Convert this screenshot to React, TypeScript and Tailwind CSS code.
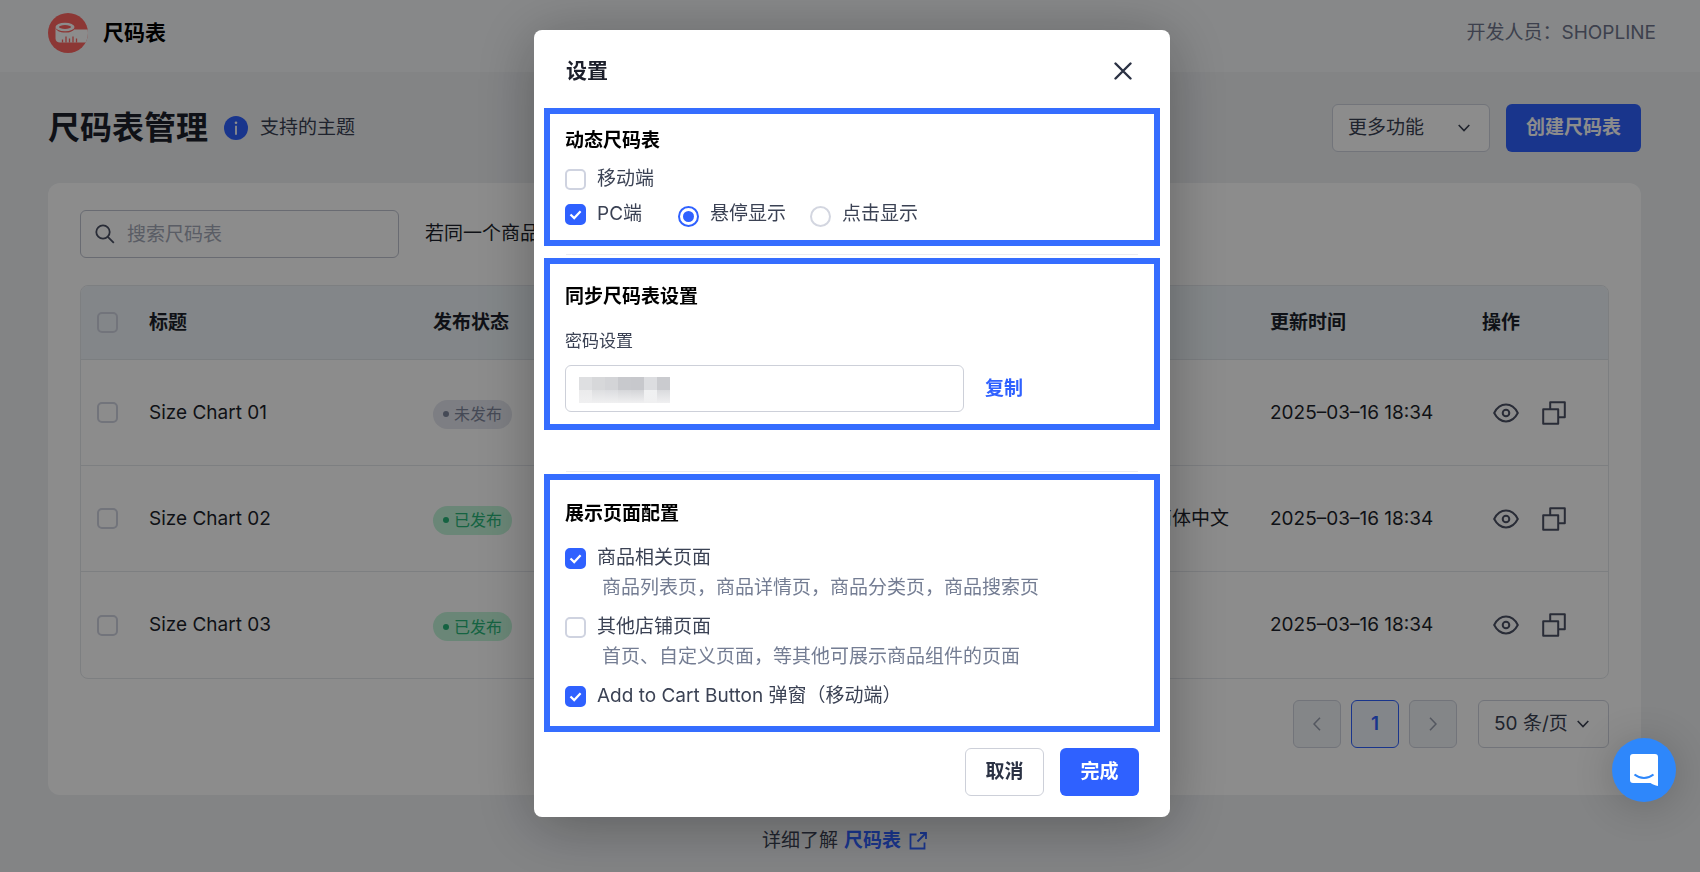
import React from 'react';

type CheckProps = { label: string; checked?: boolean; hideLabel?: boolean };

function Check({ label, checked = false, hideLabel = false }: CheckProps) {
  return (
    <label className="flex items-center gap-[11px]">
      <span className="relative block size-[21px] shrink-0">
        <input
          type="checkbox"
          defaultChecked={checked}
          aria-label={hideLabel ? label : undefined}
          className="peer block size-[21px] appearance-none rounded-[5px] border-2 border-[#cfd3e0] checked:border-[#2f61ff] checked:bg-[#2f61ff]"
        />
        <svg
          viewBox="0 0 21 21"
          fill="none"
          stroke="white"
          strokeWidth="2.2"
          className="pointer-events-none absolute inset-0 hidden peer-checked:block"
        >
          <path d="M5.500 10.500l3.700 3.600 6.400-6.800" />
        </svg>
      </span>
      {!hideLabel && <span>{label}</span>}
    </label>
  );
}

function Radio({ label, checked = false }: CheckProps) {
  return (
    <label className="flex items-center gap-[11px]">
      <span className="relative mt-1 block size-[21px] shrink-0">
        <input
          type="radio"
          name="trigger"
          defaultChecked={checked}
          className="peer block size-[21px] appearance-none rounded-full border-2 border-[#d3d6e0] checked:border-[#2f61ff]"
        />
        <span className="pointer-events-none absolute inset-[5px] hidden rounded-full bg-[#2f61ff] peer-checked:block" />
      </span>
      <span>{label}</span>
    </label>
  );
}

function Chevron({ className = '' }: { className?: string }) {
  return (
    <svg viewBox="0 0 12 8" fill="none" stroke="#3a4152" strokeWidth="1.6" className={`h-2 w-3 ${className}`}>
      <path d="M.7 1L6 6.500 11.300 1" />
    </svg>
  );
}

function Logo() {
  return (
    <svg viewBox="0 0 40 40" className="size-10">
      <defs>
        <clipPath id="disc">
          <circle cx="20" cy="20" r="20" />
        </clipPath>
      </defs>
      <g clipPath="url(#disc)">
        <rect width="40" height="40" fill="#ff6562" />
        <path d="M7.500 14v11.500c0 2.500 2 4 4.500 4h28V16.500H26c-1 2-4.500 3.100-9 3.100-5 0-9.500-2-9.500-5.600z" fill="#fff" />
        <ellipse cx="17" cy="14" rx="9.500" ry="4.300" fill="#fff" />
        <ellipse cx="17" cy="14" rx="6" ry="1.900" fill="#ff6562" />
        <path d="M14.500 29.500v-3M18 29.500v-6M21.500 29.500v-4M25 29.500v-6M28.500 29.500v-4" stroke="#ff6562" strokeWidth="1.300" />
      </g>
    </svg>
  );
}

const rows = [
  { title: 'Size Chart 01', published: false, lang: '', time: '2025–03–16 18:34' },
  { title: 'Size Chart 02', published: true, lang: '简体中文', time: '2025–03–16 18:34' },
  { title: 'Size Chart 03', published: true, lang: '', time: '2025–03–16 18:34' },
];

function Badge({ published }: { published: boolean }) {
  return (
    <span
      className={`mt-[3px] inline-flex h-[29px] items-center gap-[5px] rounded-full px-[10px] text-base leading-none ${
        published ? 'bg-[#c2f5d9] text-[#27b578]' : 'bg-[#e4e6ee] text-[#7f879d]'
      }`}
    >
      <span className="size-1.5 rounded-full bg-current" />
      {published ? '已发布' : '未发布'}
    </span>
  );
}

function ChartTable() {
  return (
    <div className="mt-[27px] overflow-hidden rounded-lg border border-[#e4e7ec]">
      <table className="w-full table-fixed border-separate border-spacing-0 text-left text-[#1c1f2b]">
        <colgroup>
          <col className="w-[52px]" />
          <col className="w-[284px]" />
          <col />
          <col className="w-[117px]" />
          <col className="w-[212px]" />
          <col className="w-[142px]" />
        </colgroup>
        <thead className="bg-[#eff5f9]">
          <tr className="*:h-[74px] *:border-b *:border-[#e0e5ea] *:px-4 *:font-semibold">
            <th>
              <Check label="全选" hideLabel />
            </th>
            <th>标题</th>
            <th>发布状态</th>
            <th></th>
            <th>更新时间</th>
            <th>操作</th>
          </tr>
        </thead>
        <tbody>
          {rows.map((row) => (
            <tr key={row.title} className="*:h-[106px] *:border-b *:border-[#e4e7ec] *:px-4 last:*:border-b-0">
              <td>
                <Check label={row.title} hideLabel />
              </td>
              <td>{row.title}</td>
              <td>
                <Badge published={row.published} />
              </td>
              <td className="whitespace-nowrap">{row.lang}</td>
              <td className="whitespace-nowrap">{row.time}</td>
              <td>
                <div className="flex items-center gap-[23px] pl-[11px] text-[#4b5164]">
                  <button aria-label="查看">
                    <svg viewBox="0 0 26 20" fill="none" stroke="currentColor" strokeWidth="2" className="h-5 w-[26px]">
                      <path d="M1.200 10C4 4.500 8 1.600 13 1.600S22 4.500 24.800 10C22 15.500 18 18.400 13 18.400S4 15.500 1.200 10z" />
                      <circle cx="13" cy="10" r="3.300" />
                    </svg>
                  </button>
                  <button aria-label="复制尺码表">
                    <svg viewBox="0 0 24 24" fill="none" stroke="currentColor" strokeWidth="2" strokeLinejoin="round" className="size-6">
                      <path d="M1.200 8.200h15v14.600h-15z" />
                      <path d="M8.200 8.200v-7h14.600v15h-6.600" />
                    </svg>
                  </button>
                </div>
              </td>
            </tr>
          ))}
        </tbody>
      </table>
    </div>
  );
}

function Pager() {
  return (
    <div className="mt-[21px] flex justify-end gap-[10px]">
      <button aria-label="上一页" className="grid size-12 place-items-center rounded-md border border-[#cfd3de] bg-[#f1f4f8]">
        <svg viewBox="0 0 8 14" fill="none" stroke="#9aa0b0" strokeWidth="1.600" className="h-3.5 w-2">
          <path d="M7 .8L1 7l6 6.200" />
        </svg>
      </button>
      <button className="size-12 rounded-md border border-[#2f61ff] bg-[#eff4fb] font-semibold text-[#2f61ff]">1</button>
      <button aria-label="下一页" className="grid size-12 place-items-center rounded-md border border-[#cfd3de] bg-[#f1f4f8]">
        <svg viewBox="0 0 8 14" fill="none" stroke="#9aa0b0" strokeWidth="1.600" className="h-3.5 w-2">
          <path d="M1 .8L7 7l-6 6.200" />
        </svg>
      </button>
      <div className="relative ml-[11px] w-[131px]">
        <select aria-label="每页条数" className="h-12 w-full appearance-none rounded-md border border-[#cfd3de] bg-transparent pl-[15px] text-[#3a4152]">
          <option>50 条/页</option>
        </select>
        <Chevron className="pointer-events-none absolute top-5 right-5" />
      </div>
    </div>
  );
}

function SettingsModal() {
  return (
    <div className="fixed inset-0 flex items-start justify-center overflow-auto bg-black/45 pt-[30px] pl-1">
      <div
        role="dialog"
        aria-labelledby="settings-title"
        className="w-[636px] rounded-lg bg-white pb-[21px] leading-7 text-[#3b4254] shadow-[0_8px_60px_rgba(0,0,0,0.3)]"
      >
        <div className="flex h-[78px] items-center justify-between pt-[3px] pr-[38px] pl-8">
          <h2 id="settings-title" className="text-[21px] font-semibold text-[#1c1f2b]">设置</h2>
          <button aria-label="关闭">
            <svg viewBox="0 0 18 18" fill="none" stroke="#2b3244" strokeWidth="2.400" strokeLinecap="round" className="size-[18px]">
              <path d="M1.500 1.500l15 15M16.500 1.500l-15 15" />
            </svg>
          </button>
        </div>

        {/* Dynamic size chart */}
        <section className="mx-[10px] border-6 border-[#356dff] px-[15px] pt-[13px] pb-3">
          <h3 className="font-semibold text-black">动态尺码表</h3>
          <div className="mt-[10px] flex">
            <Check label="移动端" />
          </div>
          <div className="mt-[7px] flex items-center">
            <Check label="PC端" checked />
            <div className="ml-9 flex gap-6">
              <Radio label="悬停显示" checked />
              <Radio label="点击显示" />
            </div>
          </div>
        </section>

        <hr className="mx-8 mt-2 mb-[3px] border-[#ececf0]" />

        {/* Sync settings */}
        <section className="mx-[10px] border-6 border-[#356dff] px-[15px] pt-[19px] pb-3">
          <h3 className="font-semibold text-black">同步尺码表设置</h3>
          <label htmlFor="sync-password" className="mt-4 block text-[17px]">密码设置</label>
          <div className="mt-[10px] flex items-center">
            <div className="relative w-[399px]">
              <input id="sync-password" className="block h-[47px] w-full rounded-md border border-[#cdd0d9] px-3" />
              {/* Masked password */}
              <div className="pointer-events-none absolute top-3 left-[14px] grid grid-cols-7">
                {['bg-[#dedfe1]', 'bg-[#d7d8da]', 'bg-[#d3d4d7]', 'bg-[#c8c9cd]', 'bg-[#c7c8cc]', 'bg-[#dcdde0]', 'bg-[#cacbcf]'].map((c, i) => (
                  <span key={i} className={`h-[13px] w-[13px] ${c}`} />
                ))}
                {['from-[#ebebec]', 'from-[#dedfe1]', 'from-[#dcdde0]', 'from-[#d6d7da]', 'from-[#d4d5d8]', 'from-[#f0f1f2]', 'from-[#dadbde]'].map((c, i) => (
                  <span key={i} className={`h-[13px] w-[13px] bg-linear-to-b to-[#f0f0f1] ${c}`} />
                ))}
              </div>
            </div>
            <button className="ml-[21px] font-semibold text-[#2f61ff]">复制</button>
          </div>
        </section>

        <hr className="mx-8 mt-[41px] mb-0.5 border-[#ececf0]" />

        {/* Pages that show the chart */}
        <section className="mx-[10px] border-6 border-[#356dff] px-[15px] pt-5 pb-4">
          <h3 className="font-semibold text-black">展示页面配置</h3>
          <div className="mt-4 flex">
            <Check label="商品相关页面" checked />
          </div>
          <p className="mt-0.5 pl-[37px] text-[#747d93]">商品列表页，商品详情页，商品分类页，商品搜索页</p>
          <div className="mt-[11px] flex">
            <Check label="其他店铺页面" />
          </div>
          <p className="mt-0.5 pl-[37px] text-[#747d93]">首页、自定义页面，等其他可展示商品组件的页面</p>
          <div className="mt-[11px] flex">
            <Check label="Add to Cart Button 弹窗（移动端）" checked />
          </div>
        </section>

        <div className="mt-4 flex justify-end gap-4 pr-[31px]">
          <button className="h-12 w-[79px] rounded-md border border-[#cdd0d9] font-semibold text-[#2b3244]">取消</button>
          <button className="h-12 w-[79px] rounded-md bg-[#2f61ff] font-semibold text-white">完成</button>
        </div>
      </div>
    </div>
  );
}

export default function App() {
  return (
    <div className="min-h-screen bg-[#eef0f3] font-['Inter','Noto_Sans_CJK_SC',sans-serif] text-[19px] leading-7 text-[#3a4152]">
      <header className="flex h-[72px] items-center justify-between bg-[#f6f8fa] pr-11 pb-1.5 pl-12">
        <div className="flex items-center gap-[15px]">
          <Logo />
          <span className="text-[21px] font-semibold text-black">尺码表</span>
        </div>
        <div className="text-[#6f768c]">开发人员：SHOPLINE</div>
      </header>

      <main className="pt-8 pr-[59px] pl-12">
        <div className="flex items-center">
          <h1 className="text-[32px] font-semibold text-[#1c1f2b]">尺码表管理</h1>
          <span className="ml-4 grid size-6 place-items-center rounded-full bg-[#2f61ff]">
            <svg viewBox="0 0 4 14" fill="white" className="h-3.5 w-1">
              <circle cx="2" cy="1.700" r="1.300" />
              <path d="M1.100 4.800h1.800v9H1.100z" />
            </svg>
          </span>
          <span className="ml-3">支持的主题</span>
          <div className="relative ml-auto w-[158px]">
            <select aria-label="更多功能" className="block h-12 w-full appearance-none rounded-md border border-[#cfd3de] bg-white pl-[15px]">
              <option>更多功能</option>
            </select>
            <Chevron className="pointer-events-none absolute top-5 right-5" />
          </div>
          <button className="ml-4 h-12 w-[135px] rounded-md bg-[#2f61ff] font-semibold text-white">创建尺码表</button>
        </div>

        <div className="mt-[31px] rounded-xl bg-white px-8 pt-[27px] pb-[47px]">
          <div className="flex items-center gap-[26px]">
            <div className="relative w-[319px]">
              <svg viewBox="0 0 20 20" fill="none" stroke="#4b5164" strokeWidth="1.800" className="absolute top-[14px] left-[15px] size-5">
                <circle cx="8" cy="8" r="6.700" />
                <path d="M12.800 12.800l6 6" />
              </svg>
              <input
                type="search"
                aria-label="搜索尺码表"
                placeholder="搜索尺码表"
                className="block h-12 w-full rounded-md border border-[#bfc3d0] pl-[46px] placeholder:text-[#a4a9b8]"
              />
            </div>
            <span className="text-[#1c1f2b]">若同一个商品</span>
          </div>
          <ChartTable />
          <Pager />
        </div>

        <p className="flex items-center justify-center pt-8">
          详细了解
          <a href="#" className="ml-1.5 flex items-center gap-2 font-semibold text-[#2f61ff]">
            尺码表
            <svg viewBox="0 0 18 18" fill="none" stroke="currentColor" strokeWidth="1.800" className="size-[18px]">
              <path d="M7.500 2.500H1.500v14h14v-6M11 1h6v6M17 1L8.500 9.500" />
            </svg>
          </a>
        </p>
      </main>

      <SettingsModal />

      <button
        aria-label="在线客服"
        className="fixed right-6 bottom-[70px] grid size-16 place-items-center rounded-full bg-[#2e87fb] shadow-[0_4px_40px_rgba(0,0,0,0.2)]"
      >
        <svg viewBox="0 0 28 32" className="h-8 w-7">
          <path d="M3 0h22a3 3 0 013 3v29c-3-.6-5.500-1.700-7.500-3H3a3 3 0 01-3-3V3a3 3 0 013-3z" fill="#fff" />
          <path d="M4.500 20.500c5.500 4.500 13.500 4.500 19 0" fill="none" stroke="#2e87fb" strokeWidth="2" />
        </svg>
      </button>
    </div>
  );
}
